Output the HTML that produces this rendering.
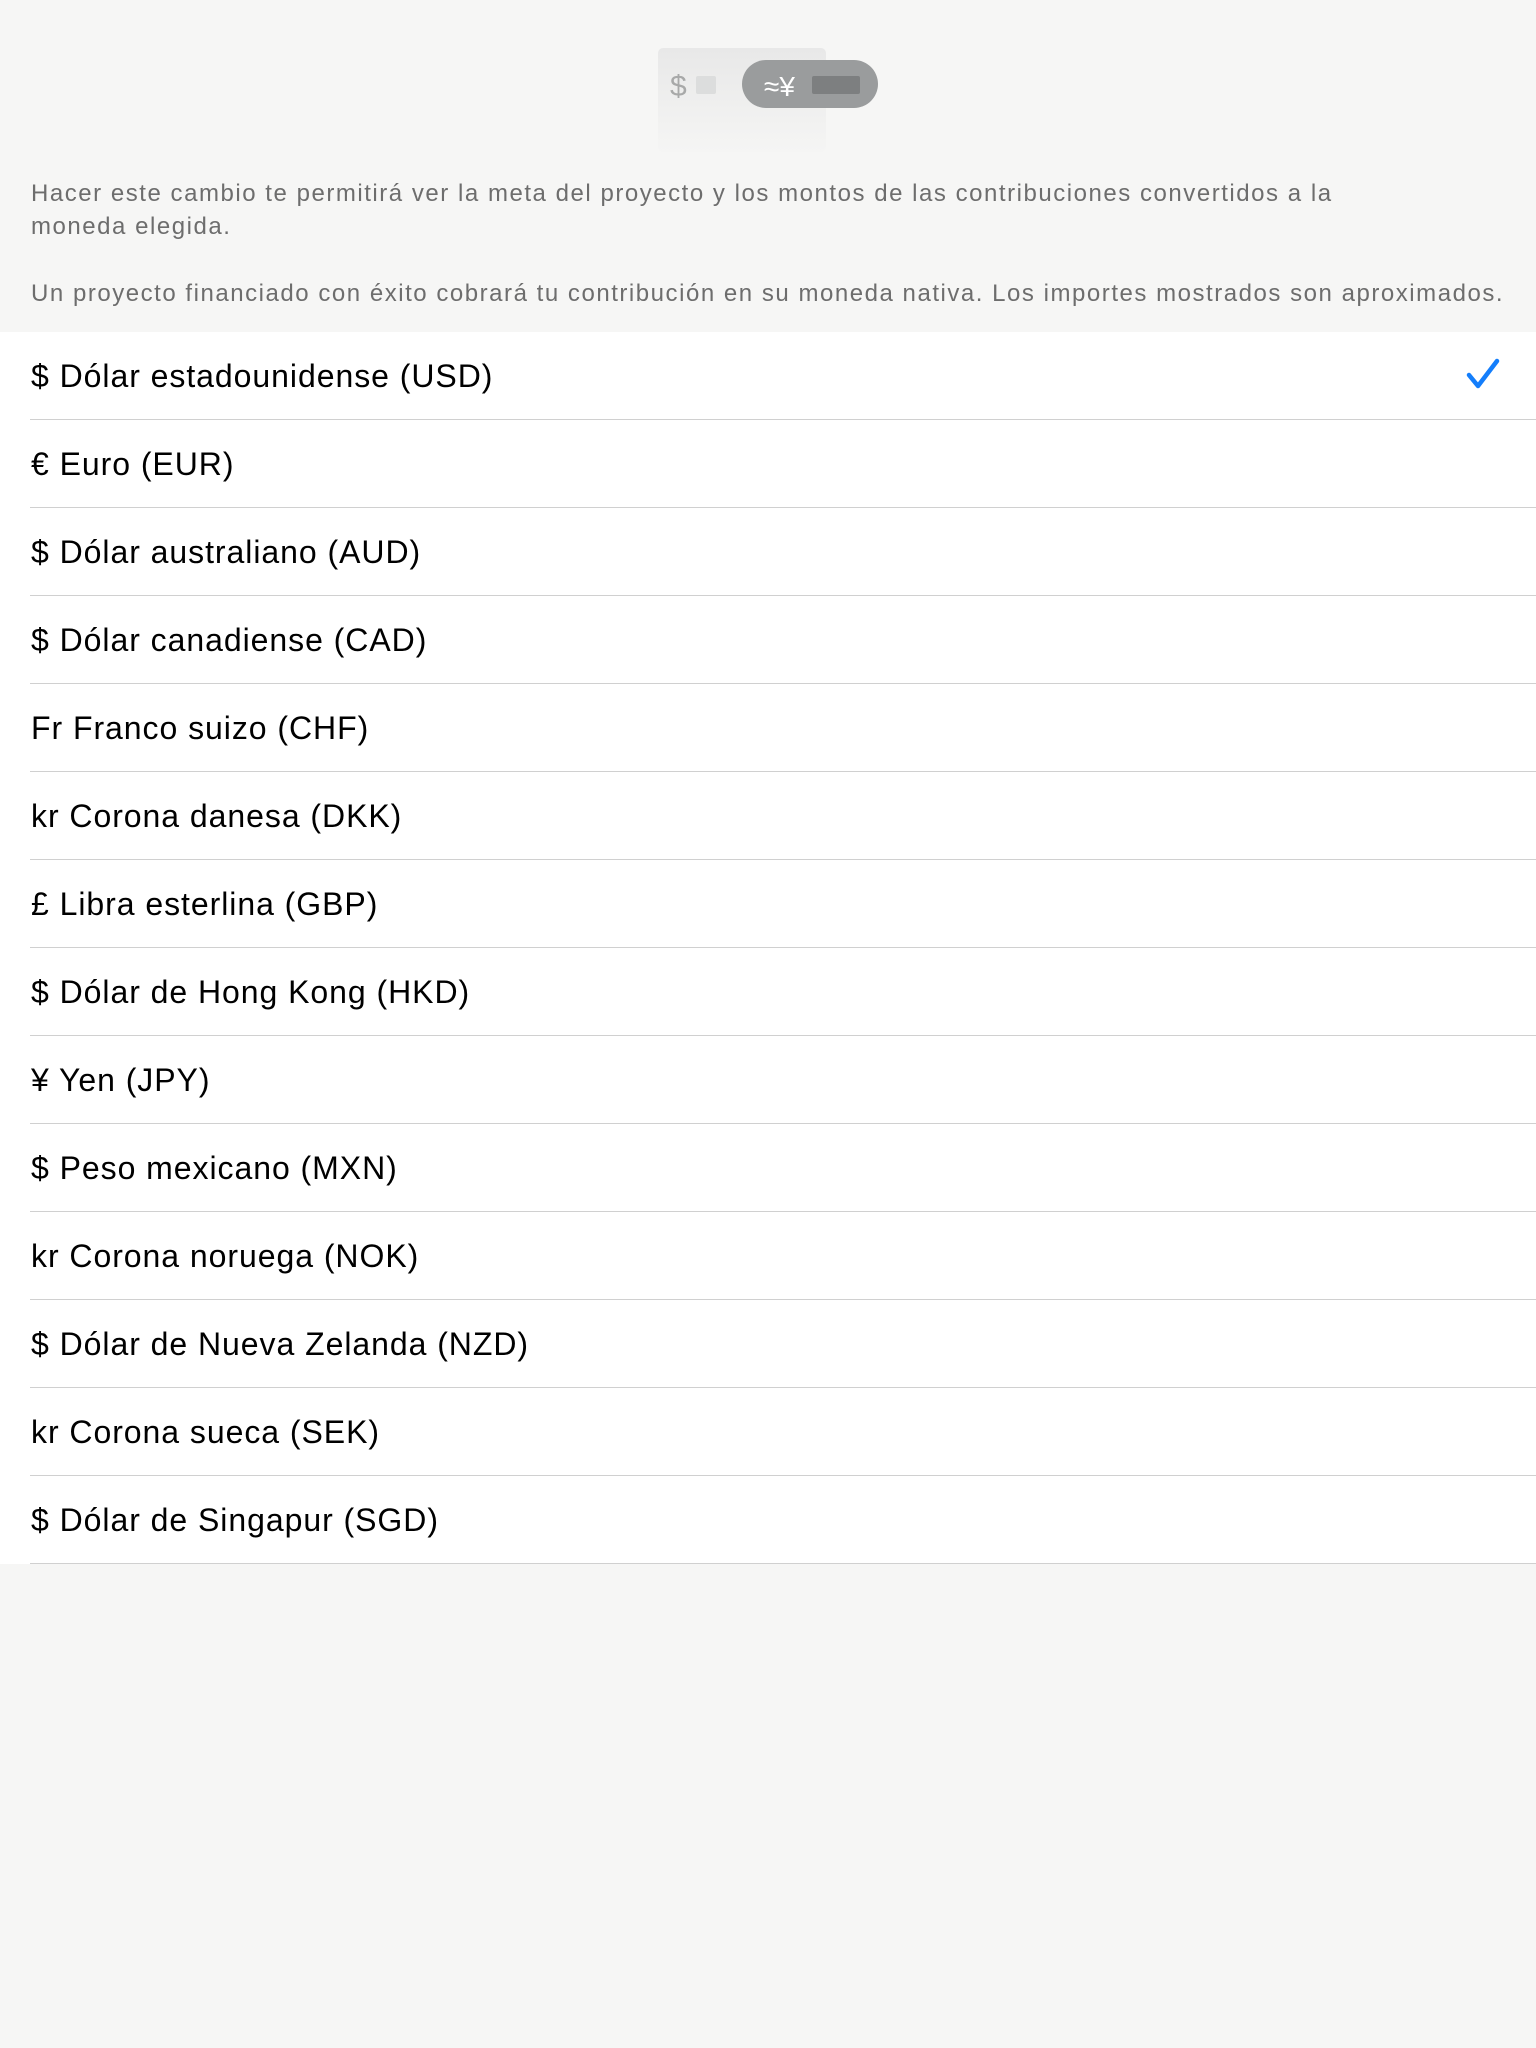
<!DOCTYPE html>
<html><head><meta charset="utf-8"><style>
html,body{margin:0;padding:0;width:1536px;height:2048px;background:#f6f6f5;font-family:"Liberation Sans",sans-serif;overflow:hidden}
.card{position:absolute;left:658px;top:48px;width:168px;height:104px;border-radius:5px;background:linear-gradient(#e8e8e8,#f5f5f4)}
.dol{position:absolute;left:670px;top:70px;font-size:30px;color:#a8a9a9}
.sq{position:absolute;left:696px;top:76px;width:20px;height:18px;background:#dcdddd;border-radius:2px}
.pill{position:absolute;left:742px;top:60px;width:136px;height:48px;border-radius:24px;background:#9a9c9d}
.yen{position:absolute;left:764px;top:71px;font-size:28px;color:#fff}
.dk{position:absolute;left:812px;top:76px;width:48px;height:18px;background:#7d7f80;border-radius:2px}
.txt{position:absolute;left:31px;width:1505px;font-size:24px;line-height:33px;color:#6d6d6d;letter-spacing:1.53px}
.list{position:absolute;left:0;top:332px;width:1536px;background:#fff}
.row{height:87px;border-bottom:1px solid #d0d0d0;margin-left:30px;position:relative;font-size:32px;line-height:87px;color:#000;letter-spacing:0.95px}
.row span{position:absolute;left:1px;top:1px}
svg{position:absolute;right:36px;top:26px}
</style></head><body>
<div class="card"></div><div class="dol">$</div><div class="sq"></div>
<div class="pill"></div><div class="yen">≈¥</div><div class="dk"></div>
<div class="txt" style="top:177px">Hacer este cambio te permitirá ver la meta del proyecto y los montos de las contribuciones convertidos a la<br>moneda elegida.</div>
<div class="txt" style="top:277px">Un proyecto financiado con éxito cobrará tu contribución en su moneda nativa. Los importes mostrados son aproximados.</div>
<div class="list">
<div class="row"><span>$ Dólar estadounidense (USD)</span><svg width="34" height="32" viewBox="0 0 34 32"><path d="M3 17 L12 28 L31 3" fill="none" stroke="#147efb" stroke-width="4.5" stroke-linecap="round" stroke-linejoin="round"/></svg></div>
<div class="row"><span>€ Euro (EUR)</span></div>
<div class="row"><span>$ Dólar australiano (AUD)</span></div>
<div class="row"><span>$ Dólar canadiense (CAD)</span></div>
<div class="row"><span>Fr Franco suizo (CHF)</span></div>
<div class="row"><span>kr Corona danesa (DKK)</span></div>
<div class="row"><span>£ Libra esterlina (GBP)</span></div>
<div class="row"><span>$ Dólar de Hong Kong (HKD)</span></div>
<div class="row"><span>¥ Yen (JPY)</span></div>
<div class="row"><span>$ Peso mexicano (MXN)</span></div>
<div class="row"><span>kr Corona noruega (NOK)</span></div>
<div class="row"><span>$ Dólar de Nueva Zelanda (NZD)</span></div>
<div class="row"><span>kr Corona sueca (SEK)</span></div>
<div class="row"><span>$ Dólar de Singapur (SGD)</span></div>
</div>
</body></html>
